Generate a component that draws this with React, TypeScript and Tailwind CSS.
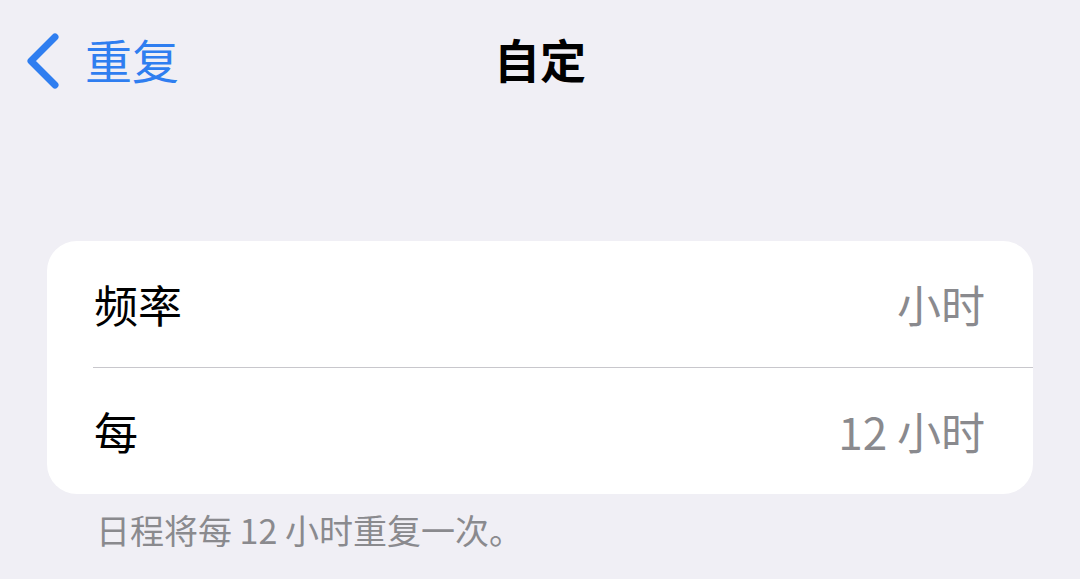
type Row = { label: string; value: string };

const rows: Row[] = [
  { label: '频率', value: '小时' },
  { label: '每', value: '12 小时' },
];

export default function App() {
  return (
    <div className="w-[1080px] h-[579px] bg-[#f0eff5] overflow-hidden flex flex-col font-['Noto_Sans_CJK_SC',sans-serif]">
      <div className="h-[120px] grid grid-cols-[1fr_auto_1fr] items-center">
        <div className="flex items-center pl-[18px] text-[#2f7ef0]">
          <svg width="52" height="60" viewBox="0 0 52 60" className="shrink-0">
            <path
              d="M37 7 L13 31 L37 55"
              fill="none"
              stroke="currentColor"
              strokeWidth="7"
              strokeLinecap="round"
              strokeLinejoin="round"
            />
          </svg>
          <span className="ml-[15px] text-[47px] leading-none pb-[4px]">重复</span>
        </div>
        <div className="text-[46px] font-bold text-black leading-none pb-[4px]">自定</div>
        <div />
      </div>

      <div className="mt-[121px] mx-[47px] bg-white rounded-[30px] overflow-hidden">
        {rows.map((r, i) => (
          <div key={r.label}>
            {i > 0 && <div className="ml-[46px] h-px bg-[#c8c7cc]" />}
            <div className="h-[126px] flex items-center justify-between pl-[47px] pr-[48px]">
              <span className="text-[44px] text-black leading-none">{r.label}</span>
              <span className="text-[44px] text-[#8a8a8e] leading-none">{r.value}</span>
            </div>
          </div>
        ))}
      </div>

      <div className="pl-[96px] pt-[16px] text-[34px] leading-[1.2] text-[#8a8a8e]">
        日程将每 12 小时重复一次。
      </div>
    </div>
  );
}
